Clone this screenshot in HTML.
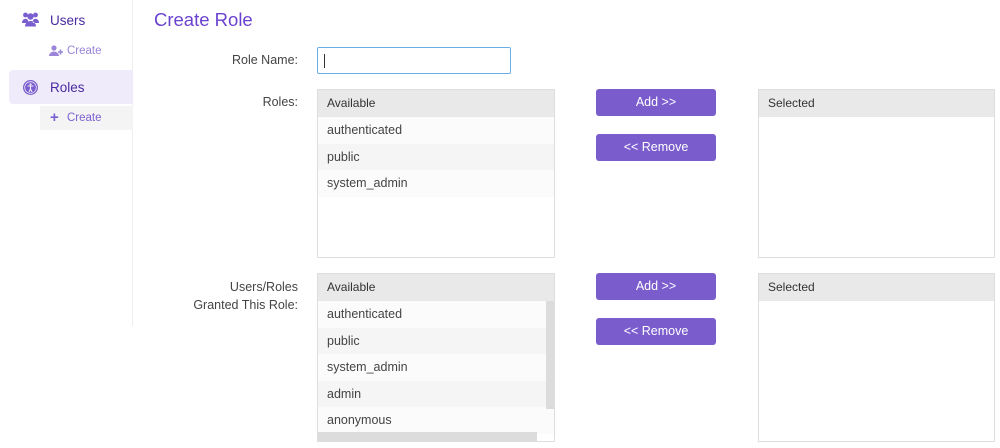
<!DOCTYPE html>
<html><head><style>
*{box-sizing:border-box;margin:0;padding:0}
body{width:1000px;height:448px;background:#fff;font-family:"Liberation Sans",sans-serif;position:relative;overflow:hidden;color:#444}
.a{position:absolute}
.side{left:0;top:0;width:133px;height:326px;border-right:1px solid #eee}
.lbl{font-size:12.5px;color:#444;text-align:right;width:298px;left:0}
.box{border:1px solid #ddd;background:#fff;overflow:hidden}
.hd{height:27px;background:#e9e9e9;font-size:12px;line-height:27px;padding-left:9px;color:#333}
.row{height:26.5px;line-height:26.5px;font-size:12.5px;padding-left:9px;color:#444}
.r1{background:#fbfbfb}.r2{background:#f5f5f5}
.btn{background:#7a5ccd;color:#fff;border-radius:3px;font-size:12.5px;text-align:center;line-height:27px;width:120px;height:27px}
</style></head><body>
<div class="a side">
 <svg class="a" style="left:22px;top:12px" width="17" height="15" viewBox="0 0 17 15"><circle cx="3.5" cy="3" r="2.4" fill="#7b5fd0"/><circle cx="13.5" cy="3" r="2.4" fill="#7b5fd0"/><circle cx="8.5" cy="4.5" r="3.2" fill="#7b5fd0"/><path d="M0 11a3.5 4 0 0 1 6-3V11zM17 11a3.5 4 0 0 0-6-3V11zM3 14.5a5.5 5.5 0 0 1 11 0z" fill="#7b5fd0"/></svg>
 <div class="a" style="left:50px;top:13px;font-size:13.5px;color:#4a2aa0">Users</div>
 <svg class="a" style="left:49px;top:45px" width="14" height="11" viewBox="0 0 14 11"><circle cx="5" cy="3" r="2.6" fill="#9a85d8"/><path d="M0 11a5 4.5 0 0 1 10 0z" fill="#9a85d8"/><path d="M9 7h5M11.5 4.5v5" stroke="#9a85d8" stroke-width="1.6"/></svg>
 <div class="a" style="left:67px;top:45px;font-size:11.5px;color:#9a85d8">Create</div>
 <div class="a" style="left:9px;top:70px;width:124px;height:34px;background:#efebfa;border-radius:4px 0 0 4px"></div>
 <svg class="a" style="left:23px;top:80px" width="15" height="15" viewBox="0 0 15 15"><circle cx="7.5" cy="7.5" r="7.5" fill="#7b5fd0"/><circle cx="7.5" cy="7.5" r="5.8" fill="none" stroke="#efebfa" stroke-width=".8"/><circle cx="7.5" cy="4.3" r="1.1" fill="#efebfa"/><path d="M4.5 6h6M7.5 6v3M7.5 9l-1.5 3M7.5 9l1.5 3" stroke="#efebfa" stroke-width="1.1"/></svg>
 <div class="a" style="left:50px;top:80px;font-size:13.5px;color:#4a2aa0">Roles</div>
 <div class="a" style="left:40px;top:106px;width:93px;height:24px;background:#f4f4f4"></div>
 <div class="a" style="left:50px;top:109px;font-size:15px;color:#7b5fd0;font-weight:bold">+</div>
 <div class="a" style="left:67px;top:112px;font-size:11.5px;color:#7b5fd0">Create</div>
</div>
<div class="a" style="left:154px;top:9px;font-size:18.5px;color:#6a42d0">Create Role</div>
<div class="a lbl" style="top:53px">Role Name:</div>
<div class="a" style="left:317px;top:47px;width:194px;height:27px;border:1px solid #6aaee8;border-radius:2px"><div class="a" style="left:6px;top:6px;width:1px;height:14px;background:#333"></div></div>
<div class="a lbl" style="top:95px">Roles:</div>
<div class="a box" style="left:317px;top:89px;width:238px;height:169px"><div class="hd">Available</div><div class="row r1">authenticated</div><div class="row r2">public</div><div class="row r1">system_admin</div></div>
<div class="a btn" style="left:596px;top:89px">Add &gt;&gt;</div>
<div class="a btn" style="left:596px;top:134px">&lt;&lt; Remove</div>
<div class="a box" style="left:758px;top:89px;width:237px;height:169px"><div class="hd">Selected</div></div>
<div class="a lbl" style="top:278px;line-height:18px">Users/Roles<br>Granted This Role:</div>
<div class="a box" style="left:317px;top:273px;width:238px;height:169px"><div class="hd">Available</div><div class="row r1">authenticated</div><div class="row r2">public</div><div class="row r1">system_admin</div><div class="row r2">admin</div><div class="row r1">anonymous</div>
<div class="a" style="left:228px;top:27px;width:9px;height:108px;background:#dcdcdc"></div>
<div class="a" style="left:0;top:158px;width:219px;height:9px;background:#dcdcdc"></div></div>
<div class="a btn" style="left:596px;top:273px">Add &gt;&gt;</div>
<div class="a btn" style="left:596px;top:318px">&lt;&lt; Remove</div>
<div class="a box" style="left:758px;top:273px;width:237px;height:169px"><div class="hd">Selected</div></div>
</body></html>
